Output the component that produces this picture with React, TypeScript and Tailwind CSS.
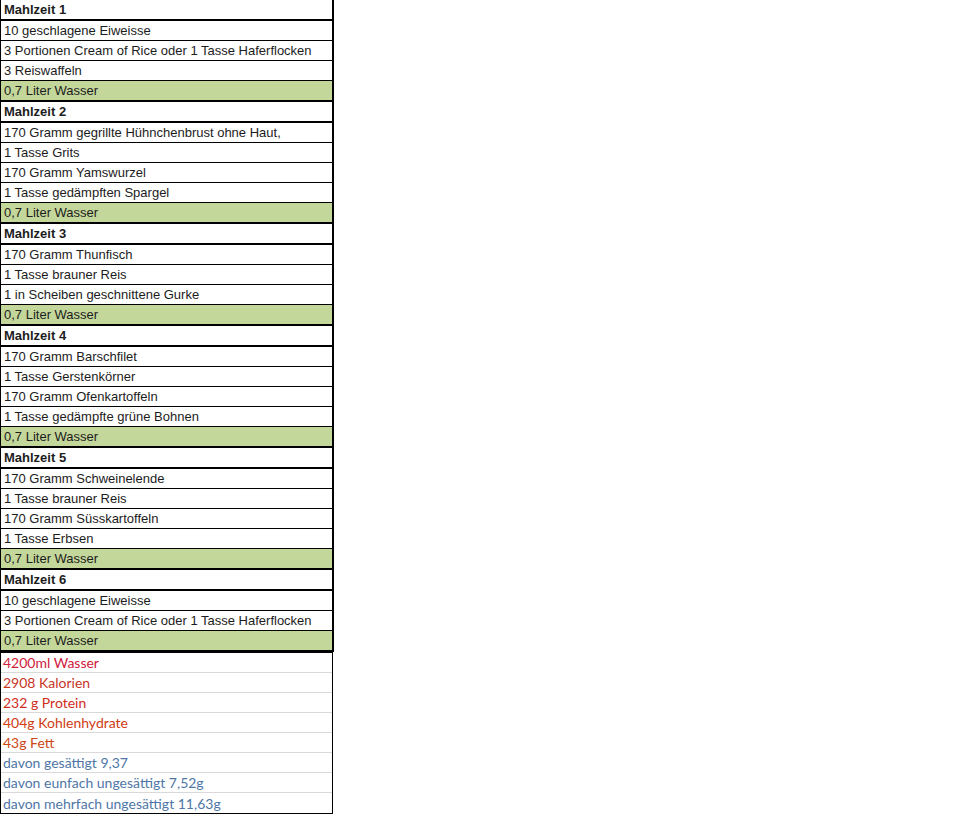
import React from "react";

type Meal = {
  title: string;
  items: string[];
};

const meals: Meal[] = [
  {
    title: "Mahlzeit 1",
    items: [
      "10 geschlagene Eiweisse",
      "3 Portionen Cream of Rice oder 1 Tasse Haferflocken",
      "3 Reiswaffeln",
    ],
  },
  {
    title: "Mahlzeit 2",
    items: [
      "170 Gramm gegrillte Hühnchenbrust ohne Haut,",
      "1 Tasse Grits",
      "170 Gramm Yamswurzel",
      "1 Tasse gedämpften Spargel",
    ],
  },
  {
    title: "Mahlzeit 3",
    items: [
      "170 Gramm Thunfisch",
      "1 Tasse brauner Reis",
      "1 in Scheiben geschnittene Gurke",
    ],
  },
  {
    title: "Mahlzeit 4",
    items: [
      "170 Gramm Barschfilet",
      "1 Tasse Gerstenkörner",
      "170 Gramm Ofenkartoffeln",
      "1 Tasse gedämpfte grüne Bohnen",
    ],
  },
  {
    title: "Mahlzeit 5",
    items: [
      "170 Gramm Schweinelende",
      "1 Tasse brauner Reis",
      "170 Gramm Süsskartoffeln",
      "1 Tasse Erbsen",
    ],
  },
  {
    title: "Mahlzeit 6",
    items: [
      "10 geschlagene Eiweisse",
      "3 Portionen Cream of Rice oder 1 Tasse Haferflocken",
    ],
  },
];

const totals = [
  { text: "4200ml Wasser", color: "text-[#d0203c]" },
  { text: "2908 Kalorien", color: "text-[#c8361f]" },
  { text: "232 g Protein", color: "text-[#d02c1c]" },
  { text: "404g Kohlenhydrate", color: "text-[#d03c12]" },
  { text: "43g Fett", color: "text-[#cc4514]" },
  { text: "davon gesättigt 9,37", color: "text-[#4f76a6]" },
  { text: "davon eunfach ungesättigt 7,52g", color: "text-[#4f76a6]" },
  { text: "davon mehrfach ungesättigt 11,63g", color: "text-[#4f76a6]" },
];

const App: React.FC = () => {
  return (
    <div className="min-h-screen w-[960px] bg-white">
      <div className="w-[334px]">
        <div className="border-l border-r-2 border-black font-['Liberation_Sans',Arial,sans-serif] text-[13px] text-[#1c1c1c]">
          {meals.map((meal) => (
            <div key={meal.title}>
              <div className="flex h-[21px] items-center border-b-2 border-black pl-[3px] font-bold">
                {meal.title}
              </div>
              {meal.items.map((item, i) => (
                <div
                  key={i}
                  className="flex h-[20px] items-center border-b border-black pl-[3px]"
                >
                  {item}
                </div>
              ))}
              <div className="flex h-[21px] items-center border-b-2 border-black bg-[#c4d79b] pl-[3px]">
                0,7 Liter Wasser
              </div>
            </div>
          ))}
        </div>
        <div className="w-[333px] border border-black font-['Lato','Open_Sans',sans-serif] text-[14px]">
          {totals.map((row, i) => (
            <div
              key={i}
              className={`flex h-[20px] items-center pl-[2px] ${row.color} ${
                i < totals.length - 1 ? "border-b border-[#d9d9d9]" : ""
              }`}
            >
              {row.text}
            </div>
          ))}
        </div>
      </div>
    </div>
  );
};

export default App;
